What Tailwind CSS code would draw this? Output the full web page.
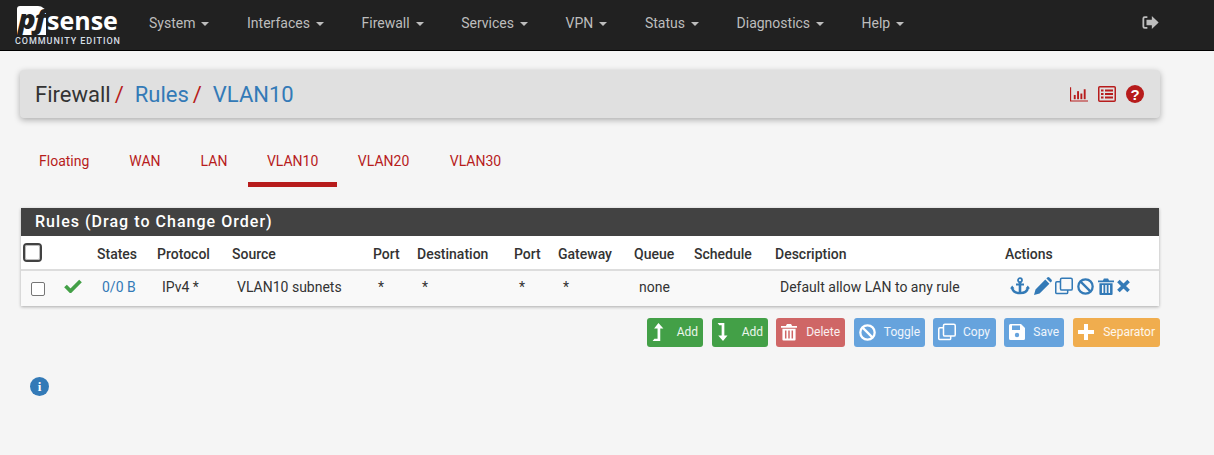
<!DOCTYPE html>
<html lang="en">
<head>
    <meta charset="UTF-8">
    <meta name="viewport" content="width=device-width, initial-scale=1.0">
    <title>pfSense - Firewall: Rules: VLAN10</title>
    <script src="https://cdn.jsdelivr.net/npm/@tailwindcss/browser@4"></script>
</head>
<body class="bg-[#f5f5f5] font-['Roboto',sans-serif] text-[14px] text-[#333] h-[455px] overflow-hidden">
    <!-- Navbar -->
    <nav class="bg-[#212121] h-[51px] border-b border-black flex items-center relative">
        <div class="w-[149px] h-full shrink-0 pl-[15px] pt-[5px]">
            <div class="flex h-[30px] items-center">
                <div class="ml-[2px] w-[29px] h-[29px] bg-white rounded-tl-[3px] rounded-tr-[8px] flex items-center justify-center">
                    <span class="font-['Open_Sans',sans-serif] italic font-extrabold text-[27px] leading-none text-[#212121] tracking-[-1px] mt-[-3px] scale-x-[1.08]">pf</span>
                </div>
                <span class="font-['Open_Sans',sans-serif] font-bold text-[25px] leading-none text-white ml-[1px] mt-[1px]">sense</span>
            </div>
            <div class="text-[9px] leading-[10px] tracking-[0.95px] text-[#d5dde3] font-medium mt-[1px] whitespace-nowrap">COMMUNITY EDITION</div>
        </div>
        <ul class="flex text-[#bdbdbd] text-[14px] mb-[4px]">
            <li class="flex items-center mr-[37.6px]">System<i class="ml-[6px] mt-[1px] border-x-[4px] border-x-transparent border-t-[4px] border-t-[#bdbdbd]"></i></li>
            <li class="flex items-center mr-[37.6px]">Interfaces<i class="ml-[6px] mt-[1px] border-x-[4px] border-x-transparent border-t-[4px] border-t-[#bdbdbd]"></i></li>
            <li class="flex items-center mr-[37.6px]">Firewall<i class="ml-[6px] mt-[1px] border-x-[4px] border-x-transparent border-t-[4px] border-t-[#bdbdbd]"></i></li>
            <li class="flex items-center mr-[37.6px]">Services<i class="ml-[6px] mt-[1px] border-x-[4px] border-x-transparent border-t-[4px] border-t-[#bdbdbd]"></i></li>
            <li class="flex items-center mr-[37.6px]">VPN<i class="ml-[6px] mt-[1px] border-x-[4px] border-x-transparent border-t-[4px] border-t-[#bdbdbd]"></i></li>
            <li class="flex items-center mr-[37.6px]">Status<i class="ml-[6px] mt-[1px] border-x-[4px] border-x-transparent border-t-[4px] border-t-[#bdbdbd]"></i></li>
            <li class="flex items-center mr-[37.4px]">Diagnostics<i class="ml-[6px] mt-[1px] border-x-[4px] border-x-transparent border-t-[4px] border-t-[#bdbdbd]"></i></li>
            <li class="flex items-center">Help<i class="ml-[6px] mt-[1px] border-x-[4px] border-x-transparent border-t-[4px] border-t-[#bdbdbd]"></i></li>
        </ul>
        <svg class="ml-auto mr-[55px] mb-[6px]" width="17" height="15" viewBox="0 0 19 16" fill="#bdbdbd">
            <path d="M6 1H3a2.5 2.5 0 0 0-2.5 2.5v9A2.5 2.5 0 0 0 3 15h3v-2H3.2a.7.7 0 0 1-.7-.7V3.7a.7.7 0 0 1 .7-.7H6z"/>
            <path d="M11 0.8 18.6 8 11 15.2V11H5V5h6z"/>
        </svg>
    </nav>

    <main class="pl-[20px] w-[1160px]">
        <!-- Breadcrumb bar -->
        <div class="mt-[19px] h-[48px] bg-[#e0e0e0] rounded-[4px] shadow-[0_2px_6px_rgba(0,0,0,0.3)] flex items-center pl-[15px] pr-[16px] text-[22px]">
            <span class="text-[#333]">Firewall</span><span class="text-[#b71c1c] ml-[4px] mr-[11px]">/</span>
            <span class="text-[#337ab7]">Rules</span><span class="text-[#b71c1c] ml-[4px] mr-[11px]">/</span>
            <span class="text-[#337ab7]">VLAN10</span>
            <div class="ml-auto flex items-center gap-[10px] text-[#b71c1c]">
                <svg width="18" height="16" viewBox="0 0 19 16" fill="#b71c1c">
                    <path d="M0 1h1.2v13.8H19V16H0z"/>
                    <rect x="4" y="9" width="2" height="4.5"/><rect x="7.5" y="5" width="2" height="8.5"/><rect x="11" y="7.5" width="2" height="6"/><rect x="14.5" y="3" width="2" height="10.5"/>
                </svg>
                <svg width="18" height="16" viewBox="0 0 18 16" fill="none">
                    <rect x="0.75" y="0.75" width="16.5" height="14.5" rx="1" stroke="#b71c1c" stroke-width="1.5"/>
                    <path d="M3 4.5h2.5M7 4.5h8M3 8h2.5M7 8h8M3 11.5h2.5M7 11.5h8" stroke="#b71c1c" stroke-width="2"/>
                </svg>
                <span class="w-[18px] h-[18px] rounded-full bg-[#b71c1c] text-white flex items-center justify-center text-[15px] font-black leading-none font-['Liberation_Sans',sans-serif]">?</span>
            </div>
        </div>

        <!-- Tabs -->
        <ul class="flex mt-[20px] h-[49px] text-[#b71c1c] text-[14px] leading-[46px]">
            <li class="pl-[19px] pr-[20px] text-center">Floating</li>
            <li class="px-[20px] text-center">WAN</li>
            <li class="pl-[20px] pr-[20.5px] text-center">LAN</li>
            <li class="px-[19px] text-center border-b-[5px] border-[#b71c1c] h-[49px]">VLAN10</li>
            <li class="pl-[20.5px] pr-[20px] text-center">VLAN20</li>
            <li class="pl-[20.5px] pr-[20px] text-center">VLAN30</li>
        </ul>

        <!-- Rules panel -->
        <section class="mt-[21px] mx-[1px] bg-white shadow-[0_1px_3px_rgba(0,0,0,0.3)]">
            <h2 class="bg-[#424242] text-white h-[28px] leading-[28px] pl-[14px] text-[16px] font-medium tracking-[1.03px]">Rules (Drag to Change Order)</h2>
            <table class="w-full table-fixed border-separate border-spacing-0">
                <colgroup>
                    <col class="w-[33px]"><col class="w-[38px]"><col class="w-[60px]"><col class="w-[75px]"><col class="w-[141px]"><col class="w-[44px]"><col class="w-[97px]"><col class="w-[44px]"><col class="w-[76px]"><col class="w-[60px]"><col class="w-[81px]"><col class="w-[230px]"><col class="w-[159px]">
                </colgroup>
                <thead>
                    <tr class="h-[35px] text-left">
                        <th class="pl-[2px] border-b-2 border-[#ddd]"><span class="block w-[19px] h-[19px] mt-[-1px] rounded-[4px] border-[2.5px] border-[#424242] bg-white outline outline-1 outline-[#bbb] -outline-offset-[3px]"></span></th>
                        <th class="border-b-2 border-[#ddd]"></th>
                        <th class="pl-[5px] pt-[3px] font-medium border-b-2 border-[#ddd]">States</th>
                        <th class="pl-[5px] pt-[3px] font-medium border-b-2 border-[#ddd]">Protocol</th>
                        <th class="pl-[5px] pt-[3px] font-medium border-b-2 border-[#ddd]">Source</th>
                        <th class="pl-[5px] pt-[3px] font-medium border-b-2 border-[#ddd]">Port</th>
                        <th class="pl-[5px] pt-[3px] font-medium border-b-2 border-[#ddd]">Destination</th>
                        <th class="pl-[5px] pt-[3px] font-medium border-b-2 border-[#ddd]">Port</th>
                        <th class="pl-[5px] pt-[3px] font-medium border-b-2 border-[#ddd]">Gateway</th>
                        <th class="pl-[5px] pt-[3px] font-medium border-b-2 border-[#ddd]">Queue</th>
                        <th class="pl-[5px] pt-[3px] font-medium border-b-2 border-[#ddd]">Schedule</th>
                        <th class="pl-[5px] pt-[3px] font-medium border-b-2 border-[#ddd]">Description</th>
                        <th class="pl-[5px] pt-[3px] font-medium border-b-2 border-[#ddd]">Actions</th>
                    </tr>
                </thead>
                <tbody>
                    <tr class="h-[35px] bg-[#f9f9f9]">
                        <td class="pl-[10px]"><span class="block w-[14px] h-[14px] rounded-[2px] border border-[#767676] bg-white"></span></td>
                        <td class="pl-[10px] pb-[3px]">
                            <svg width="18" height="14" viewBox="0 0 18 14" fill="none" class="mb-[2px]"><path d="M1.5 7 6.5 12 16.5 2" stroke="#43a047" stroke-width="3.8"/></svg>
                        </td>
                        <td class="pl-[10px] pb-[3px] text-[#337ab7]">0/0 B</td>
                        <td class="pl-[10px] pb-[3px]">IPv4 *</td>
                        <td class="pl-[10px] pb-[3px]">VLAN10 subnets</td>
                        <td class="pl-[10px] pb-[3px]">*</td>
                        <td class="pl-[10px] pb-[3px]">*</td>
                        <td class="pl-[10px] pb-[3px]">*</td>
                        <td class="pl-[10px] pb-[3px]">*</td>
                        <td class="pl-[10px] pb-[3px]">none</td>
                        <td class="pl-[10px] pb-[3px]"></td>
                        <td class="pl-[10px] pb-[3px] whitespace-nowrap">Default allow LAN to any rule</td>
                        <td class="pl-[10px] pb-[5px]">
                            <div class="flex items-center text-[#337ab7]">
                                <svg width="20" height="18" viewBox="0 0 20 18" fill="none" stroke="currentColor"><circle cx="10" cy="3.2" r="2" stroke-width="1.8"/><path d="M10 5v12" stroke-width="2.6"/><path d="M6 7.5h8" stroke-width="2"/><path d="M2 10.5c.6 3.8 4 5.6 8 5.6s7.4-1.8 8-5.6" stroke-width="2.4"/><path d="M0 11.5 2.2 8.5 4.4 11.5zM15.6 11.5 17.8 8.5 20 11.5z" fill="currentColor" stroke="none"/></svg>
                                <svg class="ml-[4px]" width="18" height="18" viewBox="0 0 18 18" fill="currentColor"><path d="M11.3 2.6 15.4 6.7 5.6 16.5 0 18l1.5-5.6zM12.4 1.5l.9-.9a1.5 1.5 0 0 1 2.1 0l2 2a1.5 1.5 0 0 1 0 2.1l-.9.9z"/></svg>
                                <svg class="ml-[3px]" width="18" height="18" viewBox="0 0 19 18" fill="none" stroke="currentColor" stroke-width="1.6"><rect x="5.8" y="0.9" width="12.4" height="12.4" rx="1.5"/><path d="M5.8 4.6H2a1.2 1.2 0 0 0-1.2 1.2v10.2A1.2 1.2 0 0 0 2 17h10.2a1.2 1.2 0 0 0 1.2-1.2v-2.5"/></svg>
                                <svg class="ml-[4px]" width="17" height="17" viewBox="0 0 18 18" fill="none" stroke="currentColor" stroke-width="2.4"><circle cx="9" cy="9" r="7.6"/><path d="M3.8 3.8 14.2 14.2"/></svg>
                                <svg class="ml-[4px]" width="16" height="17" viewBox="0 0 17 18" fill="currentColor"><path d="M0 2.6h5.2L6.3.5h4.4l1.1 2.1H17v2H0z"/><path d="M1.5 5.5h14V17a1 1 0 0 1-1 1h-12a1 1 0 0 1-1-1zM4.2 7.5v8.5h1.6V7.5zm3.5 0v8.5h1.6V7.5zm3.5 0v8.5h1.6V7.5z" fill-rule="evenodd"/></svg>
                                <svg class="ml-[3px]" width="13" height="14" viewBox="0 0 13 14" fill="none" stroke="currentColor" stroke-width="3.6"><path d="M1.4 1.9 11.6 12.1M11.6 1.9 1.4 12.1"/></svg>
                            </div>
                        </td>
                    </tr>
                </tbody>
            </table>
        </section>

        <!-- Action buttons -->
        <div class="flex justify-end mt-[12px] text-white/90 text-[12px]">
            <button class="w-[56px] h-[29px] pb-[1px] rounded-[3px] bg-[#43a047] flex items-center justify-between pl-[5px] pr-[5px] mr-[9px]">
                <svg width="12" height="18" viewBox="0 0 13 20" fill="white"><path d="M7 0 12.5 6H9v14H0.5l2-2.6H6V6H2.2z"/></svg>Add
            </button>
            <button class="w-[56px] h-[29px] pb-[1px] rounded-[3px] bg-[#43a047] flex items-center justify-between px-[5px] mr-[8px]">
                <svg width="12" height="18" viewBox="0 0 13 20" fill="white"><path d="M0.5 0H8v14h3.5L6.5 20 1.2 14H5V2.6H2.4z"/></svg>Add
            </button>
            <button class="w-[69px] h-[29px] pb-[1px] rounded-[3px] bg-[#cf6666] flex items-center justify-between px-[5px] mr-[9px]">
                <svg width="16" height="18" viewBox="0 0 17 18" fill="white"><path d="M0 2.6h5.2L6.3.5h4.4l1.1 2.1H17v2H0z"/><path d="M1.5 5.5h14V17a1 1 0 0 1-1 1h-12a1 1 0 0 1-1-1zM4.2 7.5v8.5h1.6V7.5zm3.5 0v8.5h1.6V7.5zm3.5 0v8.5h1.6V7.5z" fill-rule="evenodd"/></svg>Delete
            </button>
            <button class="w-[71px] h-[29px] pb-[1px] rounded-[3px] bg-[#66a3dd] flex items-center justify-between px-[5px] mr-[8px]">
                <svg width="17" height="17" viewBox="0 0 18 18" fill="none" stroke="white" stroke-width="2.4"><circle cx="9" cy="9" r="7.6"/><path d="M3.8 3.8 14.2 14.2"/></svg>Toggle
            </button>
            <button class="w-[63px] h-[29px] pb-[1px] rounded-[3px] bg-[#66a3dd] flex items-center justify-between pl-[5px] pr-[6px] mr-[8px]">
                <svg width="18" height="18" viewBox="0 0 19 18" fill="none" stroke="white" stroke-width="1.6"><rect x="5.8" y="0.9" width="12.4" height="12.4" rx="1.5"/><path d="M5.8 4.6H2a1.2 1.2 0 0 0-1.2 1.2v10.2A1.2 1.2 0 0 0 2 17h10.2a1.2 1.2 0 0 0 1.2-1.2v-2.5"/></svg>Copy
            </button>
            <button class="w-[60px] h-[29px] pb-[1px] rounded-[3px] bg-[#66a3dd] flex items-center justify-between px-[5px] mr-[9px]">
                <svg width="16" height="16" viewBox="0 0 16 16" fill="white"><path d="M1.5 0H12l4 4v10.5a1.5 1.5 0 0 1-1.5 1.5h-13A1.5 1.5 0 0 1 0 14.5v-13A1.5 1.5 0 0 1 1.5 0zM3 1.5V6h8V1.5z" fill-rule="evenodd"/><circle cx="8" cy="11" r="2.2" fill="#66a3dd"/></svg>Save
            </button>
            <button class="w-[87px] h-[29px] pb-[1px] rounded-[3px] bg-[#f0ad4e] flex items-center justify-between px-[5px]">
                <svg width="16" height="16" viewBox="0 0 16 16" fill="white"><path d="M6 0h4v6h6v4h-6v6H6v-6H0V6h6z"/></svg>Separator
            </button>
        </div>

        <!-- Info -->
        <div class="mt-[30px] ml-[10px] w-[19px] h-[19px] rounded-full bg-[#337ab7] text-white flex items-center justify-center text-[13px] font-bold font-['Liberation_Serif',serif] leading-none">i</div>
    </main>
</body>
</html>
